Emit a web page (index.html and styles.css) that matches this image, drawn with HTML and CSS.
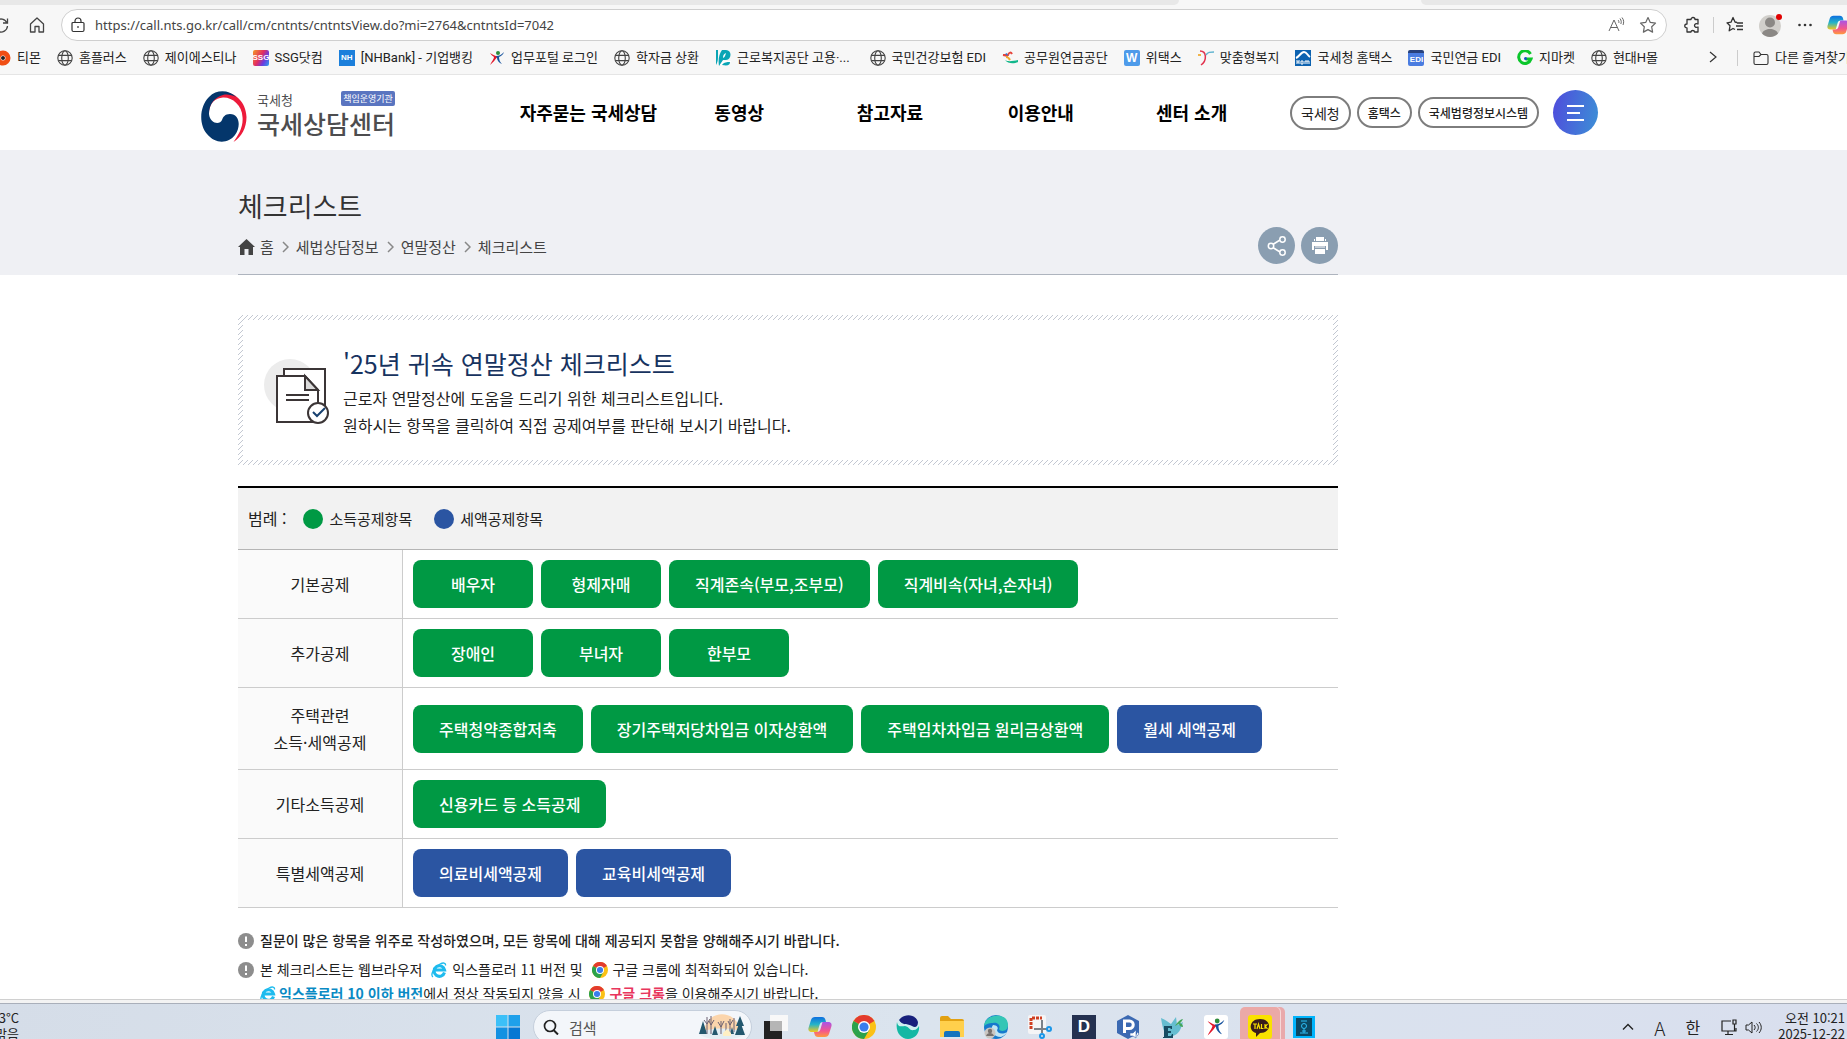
FILE: index.html
```html
<!DOCTYPE html>
<html lang="ko">

<head>
  <meta charset="UTF-8">
  <meta name="viewport" content="width=device-width, initial-scale=1.0">
  <title>체크리스트 - 국세상담센터</title>

  <link rel="stylesheet" href="styles.css">
</head>

<body>
  <!-- shared icons -->
  <svg class="sprite" aria-hidden="true">
    <symbol id="globe" viewBox="0 0 16 16">
      <g fill="none" stroke="#444" stroke-width="1.1">
        <circle cx="8" cy="8" r="7.2" />
        <ellipse cx="8" cy="8" rx="3.3" ry="7.2" />
        <path d="M1.4 5.4h13.2M1.4 10.6h13.2" />
      </g>
    </symbol>
    <symbol id="runner" viewBox="0 0 16 16">
      <path d="M1 3c3 2 5 3 8 3.500C7 8 5 12 1 15c2-4 4-6 4-8C4 6 2 5 1 3z" fill="#e2182b" />
      <path d="M7 6c3 0 5-1 8-4-1 3-3 4-5 5 0 3 1 5 3 7-3-1-5-4-5-6z" fill="#17539e" />
      <circle cx="9" cy="3" r="2" fill="#2f8c3c" />
    </symbol>
    <symbol id="chrome" viewBox="0 0 24 24">
      <circle cx="12" cy="12" r="12" fill="#fbc116" />
      <path d="M12 12 1.600 6A12 12 0 0 1 22.400 6z" fill="#e33b2e" />
      <path d="M1.600 6A12 12 0 0 0 12 24l5.200-9L12 12z" fill="#2ba24c" />
      <circle cx="12" cy="12" r="6" fill="#fff" />
      <circle cx="12" cy="12" r="4.600" fill="#3a7ded" />
    </symbol>
    <symbol id="ie" viewBox="0 0 16 16">
      <path d="M13.500 10.500A5.300 5.300 0 1 1 13.600 8H4" fill="none" stroke="#1ebbee" stroke-width="3" />
      <path d="M2 15C-1 13 3 5 9 2c3-1.500 6-1.500 5.500 1.500" fill="none" stroke="#1ebbee" stroke-width="1.300" />
    </symbol>
    <symbol id="copilot" viewBox="0 0 24 24">
      <defs>
        <linearGradient id="cp1" x1="0" y1="0" x2="0" y2="1">
          <stop offset="0" stop-color="#0d6fe0" />
          <stop offset=".5" stop-color="#25b4c8" />
          <stop offset="1" stop-color="#f5c81c" />
        </linearGradient>
        <linearGradient id="cp2" x1="0" y1="0" x2="0" y2="1">
          <stop offset="0" stop-color="#a853e8" />
          <stop offset=".6" stop-color="#f4578c" />
          <stop offset="1" stop-color="#ff9a3c" />
        </linearGradient>
      </defs>
      <path d="M7 2h7c2 0 3 1 3.500 3l.5 2h-3c-2 0-3 1-3.500 3L9.500 17H4c-3 0-4-2-3.500-4L3 5c.6-2 2-3 4-3z" fill="url(#cp1)" />
      <path d="M17 22h-7c-2 0-3-1-3.500-3L6 17h3c2 0 3-1 3.500-3L14.500 7H20c3 0 4 2 3.500 4L21 19c-.6 2-2 3-4 3z" fill="url(#cp2)" />
    </symbol>
    <symbol id="notice" viewBox="0 0 16 16">
      <circle cx="8" cy="8" r="8" fill="#8d8d8d" />
      <path d="M8 3.500v5.500M8 11v2" stroke="#fff" stroke-width="2" />
    </symbol>
    <symbol id="arrow" viewBox="0 0 8 12">
      <path d="M2 1l5 5-5 5" fill="none" stroke="#888" stroke-width="1.500" />
    </symbol>
  </svg>

  <header class="browser">
    <div class="tabs">
      <div class="tab"></div>
      <div class="tab-active"></div>
      <div class="tab"></div>
    </div>

    <div class="toolbar">
      <button class="tool reload" aria-label="새로 고침">
        <svg width="16" height="16" viewBox="0 0 16 16"><path d="M14 6A6.500 6.500 0 1 0 14.500 9M14.500 1.500V6H10" fill="none" stroke="#444" stroke-width="1.300" /></svg>
      </button>
      <button class="tool home" aria-label="홈">
        <svg width="16" height="16" viewBox="0 0 16 16"><path d="M1.500 7 8 1l6.500 6v8H10V9.500H6V15H1.500z" fill="none" stroke="#444" stroke-width="1.300" stroke-linejoin="round" /></svg>
      </button>
      <div class="address">
        <svg width="14" height="16" viewBox="0 0 14 16"><path d="M2 5.500h10a1 1 0 0 1 1 1V13a1.500 1.500 0 0 1-1.500 1.500h-9A1.500 1.500 0 0 1 1 13V6.500a1 1 0 0 1 1-1zM4 5.500V4a3 3 0 0 1 6 0v1.500M7 9v2" fill="none" stroke="#333" stroke-width="1.200" /></svg>
        <input type="text" aria-label="주소" value="https://call.nts.go.kr/call/cm/cntnts/cntntsView.do?mi=2764&amp;cntntsId=7042">
        <svg width="17" height="16" viewBox="0 0 17 16"><path d="M1 14 6 3l5 11M2.700 10.500h6.600M10 3c1 1 1 2 .8 3M12 1.500c1.500 2 1.500 4 .8 5.500M14 .5c2 2.500 2 5 1 7.500" fill="none" stroke="#666" /></svg>
        <svg width="18" height="18" viewBox="0 0 18 18"><path d="M9 1.500l2.300 4.900 5.200.7-3.800 3.700.9 5.300L9 13.600l-4.600 2.500.9-5.300L1.500 7.100l5.200-.7z" fill="none" stroke="#666" stroke-width="1.200" stroke-linejoin="round" /></svg>
      </div>
      <div class="tools">
        <svg width="18" height="18" viewBox="0 0 18 18"><path d="M5 3.500h3a2 2 0 0 1 4 0h3V8c-2-1-3.500 0-3.500 1.500S13 12 15 11v5h-3.500c0-2-3.500-2-3.500 0H4v-4c-3 0-3-4 0-4V3.500z" fill="none" stroke="#333" stroke-width="1.300" stroke-linejoin="round" /></svg>
        <span class="divider"></span>
        <svg width="18" height="18" viewBox="0 0 18 18"><path d="M11 6.500 9 6 7 1.500 5 6.200l-4 .6 3 3-.8 5L7 12.500l2 1M11 7h6M10 10h7M11 13.500h6" fill="none" stroke="#333" stroke-width="1.300" stroke-linejoin="round" /></svg>
        <svg width="24" height="24" viewBox="0 0 24 24">
          <circle cx="11" cy="13" r="11" fill="#d1cfcb" />
          <circle cx="11" cy="9.500" r="5" fill="#8b8885" />
          <path d="M3 20.500c2-6 14-6 16 0-4 4.500-12 4.500-16 0z" fill="#8b8885" />
          <circle cx="20" cy="4" r="3" fill="#e10000" />
        </svg>
        <svg width="14" height="16" viewBox="0 0 14 16"><g fill="#333"><circle cx="1.500" cy="8" r="1.300" /><circle cx="7" cy="8" r="1.300" /><circle cx="12.500" cy="8" r="1.300" /></g></svg>
        <svg class="copilot" width="22" height="22"><use href="#copilot" /></svg>
      </div>
    </div>

    <nav class="bookmarks">
      <a href="#"><svg viewBox="0 0 16 16"><circle cx="8" cy="8" r="5" fill="#fff" stroke="#f04e14" stroke-width="5" /><circle cx="8" cy="8" r="2" fill="#222" /></svg>티몬</a>
      <a href="#"><svg><use href="#globe" /></svg>홈플러스</a>
      <a href="#"><svg><use href="#globe" /></svg>제이에스티나</a>
      <a href="#"><span class="fav ssg">SSG</span>SSG닷컴</a>
      <a href="#"><span class="fav nh">NH</span>[NHBank] - 기업뱅킹</a>
      <a href="#"><svg><use href="#runner" /></svg>업무포털 로그인</a>
      <a href="#"><svg><use href="#globe" /></svg>학자금 상환</a>
      <a href="#" class="wide"><svg viewBox="0 0 16 16"><path d="M1 0h2v7c0 4-1 6-2 8z" fill="#0aa5b5" /><path d="M7 0h4c6 0 6 9 0 10H8L4 16C3 10 4 4 7 0z" fill="#0aa5b5" /><path d="M8 8c0-3 1-4 3-5-1 3-1 4-3 5zM5 15l3-4h8c-1 3-5 5-11 4z" fill="#fff" /><path d="M7 15c2-3 5-3 8-3 0 3-2 4-8 3z" fill="#0aa5b5" /></svg>근로복지공단 고용·...</a>
      <a href="#"><svg><use href="#globe" /></svg>국민건강보험 EDI</a>
      <a href="#"><svg viewBox="0 0 16 16"><path d="M1 5h5c1-3 3-3 4-1M1 5l5 1" fill="none" stroke="#e6453c" stroke-width="2" /><path d="M4 7c2 0 3 1 4 3" stroke="#f1a72b" stroke-width="2" fill="none" /><path d="M3 10c3 2 8 1 13 0v2c-4 2-10 2-13-2z" fill="#12b78c" /><path d="M3 4l3 2-1-3z" fill="#2979d8" /></svg>공무원연금공단</a>
      <a href="#"><span class="fav wetax">W</span>위택스</a>
      <a href="#"><svg viewBox="0 0 16 16"><path d="M2 1c7 0 7 10 1 14" fill="none" stroke="#e2324e" stroke-width="1.500" /><path d="M0 5h3" stroke="#f1b44a" stroke-width="2" /><path d="M8 5c2-3 4-3 8-3" fill="none" stroke="#5fb3cf" stroke-width="1.500" /></svg>맞춤형복지</a>
      <a href="#"><svg viewBox="0 0 16 16"><path d="M0 0h16v16H0z" fill="#0c62b0" /><path d="M1 8c3-1 5-6 8-6s3 3 6 5" fill="none" stroke="#fff" stroke-width="2" /><path d="M2 10v4M4 10v4M2 12h2M6 11h2v3H6zM10 14v-3h4v3M12 11v3" fill="none" stroke="#fff" /></svg>국세청 홈택스</a>
      <a href="#"><span class="fav edi">EDI</span>국민연금 EDI</a>
      <a href="#"><svg viewBox="0 0 16 16"><path d="M13.500 4A6.300 6.300 0 1 0 14 9H8.500" fill="none" stroke="#0bc62b" stroke-width="3" /><circle cx="8.500" cy="8.500" r="1.500" fill="#1454c4" /></svg>지마켓</a>
      <a href="#"><svg><use href="#globe" /></svg>현대H몰</a>
      <button class="more" aria-label="더 보기"><svg viewBox="0 0 8 12"><path d="M1 1l6 5-6 5" fill="none" stroke="#333" stroke-width="1.200" /></svg></button>
      <a href="#" class="others"><svg viewBox="0 0 16 16"><path d="M1 13V3.500A1.500 1.500 0 0 1 2.500 2H6l2 2.500h5.500A1.500 1.500 0 0 1 15 6v7a1.500 1.500 0 0 1-1.500 1.500h-11A1.500 1.500 0 0 1 1 13zM1 6.500h5l2-2" fill="none" stroke="#333" stroke-width="1.100" /></svg>다른 즐겨찾기</a>
    </nav>
  </header>

  <main class="page">
    <div class="site-header">
      <a href="#" class="logo">
        <svg width="46" height="51" viewBox="0 0 46 51">
          <path d="M17 2C29-2 45 8 45.500 26c0 11-5 20-13 25 5-7 10-15 9-25C41 14 31 6 22 6.500 14 7 9 12 8 21L5 14z" fill="#ed1b3b" />
          <path d="M8 23C8 13 14 6 22 4c4-1 9 0 13 2C28-1 16-2 8 6-2 16-2 34 6 43c8 10 21 10 28 1 6-8 5-21-5-21-5 0-7 3-8 6-2 5-12 4-13-6z" fill="#04366b" />
        </svg>
        <span class="logo-text">
          <span class="logo-small">국세청</span>
          <span class="logo-name">국세상담센터</span>
          <span class="logo-badge">책임운영기관</span>
        </span>
      </a>
      <nav class="menu">
        <a href="#">자주묻는 국세상담</a>
        <a href="#">동영상</a>
        <a href="#">참고자료</a>
        <a href="#">이용안내</a>
        <a href="#">센터 소개</a>
      </nav>
      <div class="family">
        <a href="#" class="first">국세청</a>
        <a href="#">홈택스</a>
        <a href="#">국세법령정보시스템</a>
      </div>
      <button class="all-menu" aria-label="전체메뉴">
        <svg width="18" height="16" viewBox="0 0 18 16"><path d="M0 1h17M0 8h13M0 15h17" stroke="#fff" stroke-width="2" /></svg>
      </button>
    </div>

    <div class="title-area">
      <div class="container title-inner">
        <h1>체크리스트</h1>
        <div class="title-row">
          <nav class="breadcrumb">
            <a href="#"><svg width="17" height="16" viewBox="0 0 17 16"><path d="M8.500 0 17 8h-2v8h-4.500v-6h-4v6H2V8H0z" fill="#444" /></svg>홈</a>
            <svg width="8" height="12"><use href="#arrow" /></svg>
            <a href="#">세법상담정보</a>
            <svg width="8" height="12"><use href="#arrow" /></svg>
            <a href="#">연말정산</a>
            <svg width="8" height="12"><use href="#arrow" /></svg>
            <a href="#">체크리스트</a>
          </nav>
          <div class="actions">
            <button aria-label="공유">
              <svg width="20" height="20" viewBox="0 0 20 20"><path d="M5 9l8-5M5 11l8 5" stroke="#fff" stroke-width="1.500" /><g fill="#8a9eb1" stroke="#fff" stroke-width="1.500"><circle cx="4" cy="10" r="2.700" /><circle cx="15.500" cy="3.500" r="2.700" /><circle cx="15.500" cy="16.500" r="2.700" /></g></svg>
            </button>
            <button aria-label="인쇄">
              <svg width="16" height="17" viewBox="0 0 16 17"><path d="M4 0h8v4H4zM2 2h1v2H2zM13 2h1v2h-1zM0 5h16v8h-2V9H2v4H0zM3 12h10v5H3z" fill="#fff" /><path d="M3 9h10v2H3z" fill="#c5ced8" /></svg>
            </button>
          </div>
        </div>
      </div>
    </div>

    <div class="container">
      <section class="intro">
        <div class="intro-inner">
          <svg width="66" height="66" viewBox="0 0 66 66">
            <circle cx="26" cy="26" r="26" fill="#ececec" />
            <path d="M20 11h41v52H20z" fill="#fff" />
            <g stroke="#3b3536" stroke-width="2">
              <path d="M20 16v-6h41v42" fill="none" />
              <path d="M13 17h28l13 14v32H13z" fill="#fff" />
              <path d="M41 17v14h13z" fill="#dadada" />
              <path d="M22 36h23M22 41h23" />
              <circle cx="54" cy="54" r="10" fill="#fff" />
            </g>
            <path d="M49 53l4 4 8-8" fill="none" stroke="#17406f" stroke-width="2" />
          </svg>
          <div>
            <h2>'25년 귀속 연말정산 체크리스트</h2>
            <p>근로자 연말정산에 도움을 드리기 위한 체크리스트입니다.<br>원하시는 항목을 클릭하여 직접 공제여부를 판단해 보시기 바랍니다.</p>
          </div>
        </div>
      </section>

      <table class="checklist">
        <thead>
          <tr>
            <th colspan="2">
              <div class="legend">
                <strong>범례 :</strong>
                <span class="income">소득공제항목</span>
                <span class="tax">세액공제항목</span>
              </div>
            </th>
          </tr>
        </thead>
        <tbody>
          <tr>
            <th scope="row">기본공제</th>
            <td>
              <div class="items">
                <a href="#" class="btn">배우자</a>
                <a href="#" class="btn">형제자매</a>
                <a href="#" class="btn">직계존속(부모,조부모)</a>
                <a href="#" class="btn">직계비속(자녀,손자녀)</a>
              </div>
            </td>
          </tr>
          <tr>
            <th scope="row">추가공제</th>
            <td>
              <div class="items">
                <a href="#" class="btn">장애인</a>
                <a href="#" class="btn">부녀자</a>
                <a href="#" class="btn">한부모</a>
              </div>
            </td>
          </tr>
          <tr>
            <th scope="row">주택관련<br>소득·세액공제</th>
            <td>
              <div class="items">
                <a href="#" class="btn">주택청약종합저축</a>
                <a href="#" class="btn">장기주택저당차입금 이자상환액</a>
                <a href="#" class="btn">주택임차차입금 원리금상환액</a>
                <a href="#" class="btn blue">월세 세액공제</a>
              </div>
            </td>
          </tr>
          <tr>
            <th scope="row">기타소득공제</th>
            <td>
              <div class="items">
                <a href="#" class="btn">신용카드 등 소득공제</a>
              </div>
            </td>
          </tr>
          <tr>
            <th scope="row">특별세액공제</th>
            <td>
              <div class="items">
                <a href="#" class="btn blue">의료비세액공제</a>
                <a href="#" class="btn blue">교육비세액공제</a>
              </div>
            </td>
          </tr>
        </tbody>
      </table>

      <ul class="notes">
        <li>
          <svg width="16" height="16"><use href="#notice" /></svg>
          <p><b>질문이 많은 항목을 위주로 작성하였으며, 모든 항목에 대해 제공되지 못함을 양해해주시기 바랍니다.</b></p>
        </li>
        <li>
          <svg width="16" height="16"><use href="#notice" /></svg>
          <p>본 체크리스트는 웹브라우저 <svg class="inline-icon"><use href="#ie" /></svg> 익스플로러 11 버전 및 <svg class="inline-icon"><use href="#chrome" /></svg> 구글 크롬에 최적화되어 있습니다.<br>
            <svg class="inline-icon lead"><use href="#ie" /></svg><b class="ie-text">익스플로러 10 이하 버전</b>에서 정상 작동되지 않을 시 <svg class="inline-icon"><use href="#chrome" /></svg><b class="chrome-text">구글 크롬</b>을 이용해주시기 바랍니다.</p>
        </li>
      </ul>
    </div>
  </main>

  <footer class="taskbar">
    <div class="weather"><span>3°C</span><span>맑음</span></div>

    <div class="apps">
      <button aria-label="시작"><svg viewBox="0 0 24 24"><path d="M0 0h11.500v11.500H0z" fill="#3cc0f8" /><path d="M12.500 0H24v11.500H12.500z" fill="#1fa0ea" /><path d="M0 12.500h11.500V24H0z" fill="#1391e2" /><path d="M12.500 12.500H24V24H12.500z" fill="#0677d3" /></svg></button>
      <label class="search">
        <svg width="16" height="16" viewBox="0 0 16 16"><path d="M10.500 11l4.500 4.500" stroke="#222" stroke-width="2" /><circle cx="7" cy="7" r="5.500" fill="none" stroke="#222" stroke-width="1.700" /></svg>
        <input type="text" placeholder="검색" aria-label="검색">
        <svg width="48" height="26" viewBox="0 0 48 26">
          <path d="M6 16C10-5 38-5 42 16z" fill="#fbd5ac" />
          <path d="M0 19c10-6 38-6 48 0-8 9-40 9-48 0z" fill="#e4eef3" />
          <g fill="#24586e"><path d="M5 7l4 13H1zM42 2l4 10h-8zM42 7l5 14H37zM17 12l3 9h-6zM34 13l2 7h-4z" /></g>
          <path d="M9 20V3M6 6l3 4 3-5M13 20V2M11 7l2 4 3-5M23 20V7M20 8l3 5 3-6M28 20V9M32 19V5M30 7l2 4 3-5M36 18V4" fill="none" stroke="#6c6172" />
          <path d="M25 19l4-4 4 4v3h-8z" fill="#fff0c4" />
        </svg>
      </label>
      <button aria-label="작업 보기"><svg viewBox="0 0 24 24"><path d="M6 0h18v16H6z" fill="#f8f8f8" /><path d="M0 6h18v18H0z" fill="#222" /><path d="M6 6h12v10H6z" fill="#b5b5b5" /></svg></button>
      <button aria-label="Copilot"><svg><use href="#copilot" /></svg></button>
      <button aria-label="Chrome"><svg><use href="#chrome" /></svg></button>
      <button aria-label="Whale"><svg viewBox="0 0 24 24"><circle cx="12" cy="12" r="11.500" fill="#cfeef0" /><path d="M3 5C8-2 20-1 22 7c0 5-3 6-6 4-4-3-10 0-13-6z" fill="#18207c" /><path d="M1 7c1 6 5 4 8 4 5 1 4 5 9 4 2 0 4-2 5-4 1 7-4 13-11 13S-1 17 1 7z" fill="#14b8a4" /></svg></button>
      <button aria-label="파일 탐색기"><svg viewBox="0 0 24 24"><path d="M0 3a2 2 0 0 1 2-2h6l3 3h11a2 2 0 0 1 2 2v6H0z" fill="#e2a112" /><path d="M0 6h24v16H0z" fill="#ffd04c" /><path d="M4 22v-4a2 2 0 0 1 2-2h12a2 2 0 0 1 2 2v4z" fill="#1573bd" /></svg></button>
      <button aria-label="Edge"><svg viewBox="0 0 24 24"><circle cx="12" cy="12" r="12" fill="#1679cd" /><path d="M0 12C0-2 24-4 24 10c0 7-8 7-9 4 2-4-2-7-6-6-4 0-8 1-9 4z" fill="#35c6b6" /><path d="M9 10c-4 5 0 12 8 12 3-1 5-3 6-5-5 3-10 1-10-2 2-2 0-5-4-5z" fill="#bfe5f4" /><circle cx="6" cy="18" r="5.500" fill="#cac6c2" /><circle cx="6" cy="16" r="2.200" fill="#77716e" /><path d="M2 21c1-4 7-4 8 0z" fill="#77716e" /></svg></button>
      <button aria-label="캡처 도구"><svg viewBox="0 0 24 24"><rect width="18" height="19" rx="2" fill="#f5f5f6" /><path d="M3 14V3h11" fill="none" stroke="#cf3e20" stroke-width="3" stroke-dasharray="3 1" /><path d="M14 5v13M6 14h14" stroke="#7b8187" stroke-width="2" /><g fill="none" stroke="#1a96e8" stroke-width="2"><circle cx="21" cy="14" r="2" /><circle cx="14" cy="21" r="2" /></g></svg></button>
      <button aria-label="D"><span class="app app-d">D</span></button>
      <button aria-label="P"><svg viewBox="0 0 24 24"><path d="M12 0l11 6v12l-11 6-11-6V6z" fill="#3b69b2" /><path d="M8.500 18V6h5a3.500 3.500 0 0 1 0 7.500h-5" fill="none" stroke="#fff" stroke-width="3" /><path d="M14 18h3l3-3v8l-3-2h-3zM21 17c2 1 2 3 0 4" fill="#fff" stroke="#3b69b2" stroke-width=".6" /></svg></button>
      <button aria-label="E"><svg viewBox="0 0 24 24"><path d="M1 3c5 2 7 4 10 6l5-7 1 8 6-3c-2 7-4 12-10 14-7 2-10-4-12-18z" fill="#65bdd0" /><path d="M15 11c2-3 5-7 8-7-1 3-4 5-8 7zM19 8c2 0 4 1 4 4-2 0-4-1-4-4z" fill="#43a65b" /><path d="M4 11h8v3h-1l-1-1H8v3h3v2H8v3h3l1-2h1v4H3v-1h1V12z" fill="#174c63" /></svg></button>
      <button aria-label="업무포털"><svg class="tile" viewBox="-2 -2 20 20"><use href="#runner" width="16" height="16" /></svg></button>
      <button class="alert" aria-label="카카오톡"><svg viewBox="0 0 24 24"><rect width="24" height="24" rx="3" fill="#fae100" /><path d="M12 4c12 0 12 14 0 14l-4 4v-4C0 16 1 4 12 4z" fill="#391b1b" /><path d="M5 9h4M7 9v5M9 14l1.500-5 1.500 5M13.500 9v4.500h2M17 9v5M19.500 9l-2 2.500 2 2.500" fill="none" stroke="#fae100" stroke-width="1.200" /></svg></button>
      <button aria-label="앱"><svg viewBox="0 0 24 24"><path d="M1 1h22v22H1z" fill="#00b4fc" /><path d="M4 3h16v18H4z" fill="#0b4863" /><path d="M9 6h6M8 18h8M12 14v4M10 16h4" fill="none" stroke="#2cbdf5" /><circle cx="12" cy="11" r="2.500" fill="none" stroke="#2cbdf5" /></svg></button>
    </div>

    <div class="tray">
      <svg width="12" height="8" viewBox="0 0 12 8"><path d="M1 6.500l5-5 5 5" fill="none" stroke="#222" stroke-width="1.400" /></svg>
      <span class="ime">A</span>
      <span>한</span>
      <span class="status">
        <svg width="18" height="17" viewBox="0 0 18 17"><path d="M11 2H2v10h14V9M5 15.500h8M8 12v3M13 1h3v4h-3zM14.500 5v7" fill="none" stroke="#222" stroke-width="1.200" /></svg>
        <svg width="17" height="15" viewBox="0 0 17 15"><path d="M1 5h2.500L7 2v11L3.500 10H1zM9 5c1.500 1.500 1.500 3.500 0 5M11.500 3.500c2.500 2.500 2.500 5.500 0 8M14 2c3 3.500 3 7.500 0 11" fill="none" stroke="#222" /></svg>
      </span>
      <div class="clock"><span>오전 10:21</span><span>2025-12-22</span></div>
    </div>
  </footer>
</body>

</html>
```

FILE: styles.css
```css
* {
  margin: 0;
  padding: 0;
  box-sizing: border-box;
}

body {
  height: 100vh;
  display: flex;
  flex-direction: column;
  overflow: hidden;
  background-color: #fff;
  color: #222;
  font-family: 'Noto Sans CJK KR', sans-serif;
}

a {
  color: inherit;
  text-decoration: none;
}

button {
  border: none;
  background: none;
  cursor: pointer;
}

input {
  border: none;
  outline: none;
  background: none;
  font-family: inherit;
}

svg {
  flex-shrink: 0;
}

.sprite {
  position: absolute;
  width: 0;
  height: 0;
}

/* browser */

.browser {
  flex-shrink: 0;
  background-color: #f7f7f7;
  border-bottom: 1px solid #e5e5e5;
}

.tabs {
  height: 5px;
  display: grid;
  grid-template-columns: 1179fr 242fr 426fr;
}

.tab {
  background-color: #e8e8e8;
}

.tab:first-child {
  border-bottom-right-radius: 5px;
}

.tab:last-child {
  border-bottom-left-radius: 5px;
}

.toolbar {
  height: 40px;
  display: flex;
  align-items: center;
}

.tool {
  width: 16px;
  height: 16px;
  flex-shrink: 0;
}

.reload {
  margin-left: -7px;
}

.home {
  margin: 0 16px 0 20px;
}

.address {
  flex: 1;
  height: 32px;
  display: flex;
  align-items: center;
  gap: 14px;
  padding: 0 9px;
  border: 1px solid #cfcfcf;
  border-radius: 16px;
  background-color: #fff;
}

.address input {
  flex: 1;
  margin-left: -4px;
  font-family: 'Noto Sans', sans-serif;
  font-size: 13px;
  color: #444;
}

.tools {
  width: 180px;
  display: flex;
  align-items: center;
  gap: 15px;
  padding-left: 16px;
  overflow: hidden;
}

.tools .divider {
  margin: 0 -3px;
}

.divider {
  width: 1px;
  height: 16px;
  flex-shrink: 0;
  background-color: #ccc;
}

.bookmarks {
  height: 29px;
  display: flex;
  align-items: center;
  gap: 16px;
  margin-left: -5px;
  padding-bottom: 3px;
  overflow: hidden;
  white-space: nowrap;
  font-family: Roboto, 'Noto Sans CJK KR', sans-serif;
  font-size: 13px;
  line-height: 20px;
}

.bookmarks a {
  display: flex;
  align-items: center;
  gap: 6px;
  flex-shrink: 0;
}

.bookmarks svg {
  width: 16px;
  height: 16px;
}

.bookmarks .wide {
  margin-right: 4px;
}

.fav {
  width: 16px;
  height: 16px;
  border-radius: 2px;
  color: #fff;
  font: bold 8px/16px 'Liberation Sans', sans-serif;
  text-align: center;
}

.ssg {
  background: linear-gradient(120deg, #f59a23, #e22c62 45%, #6a3be0 70%, #28a5ee);
}

.nh {
  border-radius: 0;
  background-color: #1b7fdb;
}

.wetax {
  background-color: #4e9bea;
  font-size: 12px;
}

.edi {
  border-top: 3px solid #28417c;
  background-color: #4a7ce0;
  line-height: 13px;
}

.more {
  width: 16px;
  height: 16px;
  margin-left: auto;
}

.bookmarks .more svg {
  width: 8px;
  height: 12px;
}

.bookmarks .others {
  width: 110px;
  padding-left: 15px;
  border-left: 1px solid #ccc;
  height: 16px;
}

/* page */

.page {
  flex: 1;
  min-height: 0;
  overflow: hidden;
}

.container {
  max-width: 1100px;
  margin-left: 238px;
}

.site-header {
  height: 75px;
  display: flex;
  align-items: center;
  margin-left: 201px;
}

.logo {
  width: 312px;
  display: flex;
  align-items: center;
  gap: 10px;
  padding-top: 8px;
}

.logo-text {
  display: grid;
  grid-template-columns: auto auto;
  padding-bottom: 6px;
  color: #4d4d4f;
}

.logo-small {
  font-size: 13px;
  line-height: 18px;
}

.logo-badge {
  grid-column: 2;
  grid-row: 1;
  justify-self: end;
  align-self: start;
  width: 54px;
  height: 15px;
  border-radius: 2px;
  background-color: #5a75c0;
  color: #fff;
  font-size: 9px;
  line-height: 15px;
  text-align: center;
}

.logo-name {
  grid-column: 1 / 3;
  font-size: 25px;
  font-weight: 500;
  line-height: 28px;
}

.menu {
  width: 754px;
  display: grid;
  grid-template-columns: repeat(5, 1fr);
  padding-bottom: 2px;
  text-align: center;
  font-size: 18px;
  font-weight: 700;
  line-height: 28px;
  color: #000;
  white-space: nowrap;
}

.family {
  display: flex;
  align-items: center;
  gap: 6px;
  margin-left: 23px;
}

.family a {
  height: 31px;
  padding: 0 9px;
  border: 2px solid #7d7d7d;
  border-radius: 16px;
  font-size: 12px;
  font-weight: 500;
  line-height: 27px;
}

.family .first {
  height: 34px;
  font-size: 14px;
  font-weight: 400;
  line-height: 30px;
  border-radius: 17px;
}

.all-menu {
  width: 45px;
  height: 45px;
  display: flex;
  align-items: center;
  justify-content: center;
  margin-left: 14px;
  border-radius: 50%;
  background: linear-gradient(100deg, #4f4bdc, #3c90d6);
}

.title-area {
  background-color: #eff0f4;
}

.title-inner {
  height: 125px;
  padding-top: 36px;
  border-bottom: 1px solid #aeb4be;
}

.title-inner h1 {
  font-size: 27px;
  font-weight: 400;
  line-height: 40px;
  color: #333;
}

.title-row {
  display: flex;
  align-items: center;
  justify-content: space-between;
  margin-top: 1px;
}

.breadcrumb {
  display: flex;
  align-items: center;
  gap: 7px;
  padding-top: 3px;
  font-size: 15px;
  line-height: 20px;
  color: #444;
}

.breadcrumb a {
  display: flex;
  align-items: center;
  gap: 5px;
}

.actions {
  display: flex;
  gap: 6px;
}

.actions button {
  width: 37px;
  height: 37px;
  display: flex;
  align-items: center;
  justify-content: center;
  border-radius: 50%;
  background-color: #8a9eb1;
}

.intro {
  margin-top: 40px;
  padding: 5px;
  background: linear-gradient(135deg, transparent 43%, #c3c8d2 43%, #c3c8d2 57%, transparent 57%) 0 0 / 5px 5px;
}

.intro-inner {
  height: 140px;
  display: flex;
  align-items: center;
  gap: 13px;
  padding: 3px 0 0 21px;
  background-color: #fff;
}

.intro h2 {
  margin-bottom: 4px;
  font-size: 25px;
  font-weight: 400;
  line-height: 36px;
  color: #17335f;
}

.intro p {
  font-size: 16px;
  line-height: 27px;
}

.checklist {
  width: 100%;
  margin-top: 21px;
  border-top: 2px solid #000;
  border-collapse: separate;
  border-spacing: 0;
  font-size: 16px;
  line-height: 27px;
}

.checklist th {
  font-weight: 400;
}

.checklist thead th {
  height: 62px;
  padding: 0 10px;
  border-bottom: 1px solid #b5b5b5;
  background-color: #f2f2f2;
}

.checklist tbody th {
  width: 165px;
  padding: 14px 0 13px;
  border-right: 1px solid #ccc;
  border-bottom: 1px solid #ccc;
  background-color: #fafafa;
}

.checklist td {
  padding: 10px;
  border-bottom: 1px solid #ccc;
}

.legend {
  display: flex;
  align-items: center;
  gap: 22px;
  font-size: 15px;
}

.legend strong {
  margin-right: -5px;
  font-size: 16px;
  font-weight: 400;
}

.legend span {
  display: flex;
  align-items: center;
  gap: 6px;
}

.legend span::before {
  content: '';
  width: 20px;
  height: 20px;
  border-radius: 50%;
  background-color: #009944;
}

.legend .tax::before {
  background-color: #2b55a2;
}

.items {
  display: flex;
  flex-wrap: wrap;
  gap: 8px;
}

.btn {
  min-width: 120px;
  height: 48px;
  padding: 0 26px;
  border-radius: 8px;
  background-color: #009944;
  color: #fff;
  font-weight: 500;
  line-height: 48px;
  text-align: center;
}

.btn.blue {
  background-color: #2b55a2;
}

.notes {
  margin-top: 20px;
  list-style: none;
  font-size: 14px;
  line-height: 24px;
}

.notes li {
  display: flex;
  gap: 6px;
  margin-bottom: 5px;
}

.notes li > svg {
  margin-top: 5px;
}

.notes b {
  font-weight: 500;
}

.notes b.ie-text,
.notes b.chrome-text {
  margin-left: 3px;
  font-weight: 700;
  color: #0a8ac4;
}

.notes b.chrome-text {
  color: #e8365d;
}

.inline-icon {
  width: 16px;
  height: 16px;
  margin: 0 1px 0 5px;
  vertical-align: -3px;
}

.inline-icon.lead {
  margin: 0;
}

/* taskbar */

.taskbar {
  height: 40px;
  flex-shrink: 0;
  display: grid;
  grid-template-columns: 496px 1fr auto;
  align-items: start;
  overflow: hidden;
  border-top: 1px solid #d0d0d0;
  background: linear-gradient(#f3f3f3 3px, #a9afba 3px, #a9afba 4px, transparent 4px), linear-gradient(90deg, #d5dde8, #dbe4ee 50%, #d9dfee);
  padding-top: 3px;
}

.weather,
.clock {
  display: flex;
  flex-direction: column;
  align-items: flex-end;
  padding-top: 7px;
  white-space: nowrap;
  font-size: 13px;
  line-height: 16px;
}

.weather {
  width: 19px;
}

.apps {
  height: 48px;
  display: flex;
  align-items: center;
  gap: 20px;
}

.apps button,
.apps button svg,
.app {
  width: 24px;
  height: 24px;
  display: block;
}

.search {
  width: 219px;
  height: 34px;
  display: flex;
  align-items: center;
  padding: 0 5px 0 9px;
  margin: 0 -8px 0 -7px;
  border: 1px solid #c5cfdc;
  border-radius: 17px;
  background-color: #f3f6fa;
}

.search input {
  flex: 1;
  min-width: 0;
  padding-left: 10px;
  font-size: 15px;
}

.search input::placeholder {
  color: #555;
}

.app-d {
  background-color: #243150;
  color: #fff;
  font: bold 17px/24px 'Liberation Sans', sans-serif;
}

.tile {
  border-radius: 3px;
  background-color: #fff;
}

.apps .alert {
  width: 40px;
  height: 40px;
  margin: 0 -8px;
  padding: 8px;
  border-radius: 5px;
  background-color: #eba9a7;
  box-shadow: 1px 0 #f6d8d8, 5px 0 #e9a9ab;
}

.tray {
  height: 48px;
  display: flex;
  align-items: center;
  gap: 20px;
  padding-right: 2px;
  font-size: 16px;
}

.ime {
  font-size: 19px;
  font-weight: 300;
}

.status {
  display: flex;
  align-items: center;
  gap: 7px;
}

.tray .clock {
  height: 48px;
  margin-left: -4px;
}
```
